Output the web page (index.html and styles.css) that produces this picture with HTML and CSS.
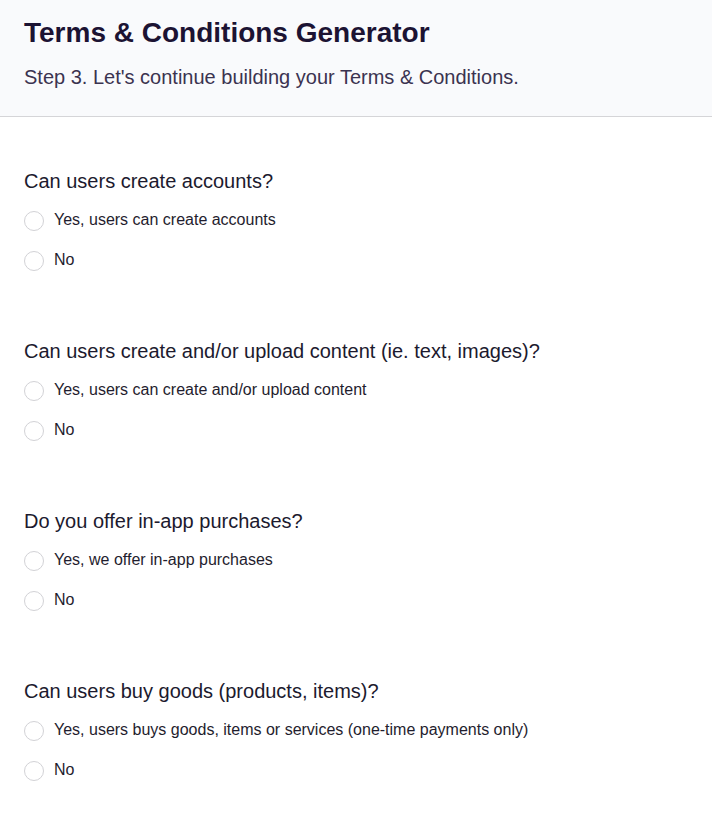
FILE: index.html
```html
<!DOCTYPE html>
<html lang="en">
<head>
<meta charset="utf-8">
<title>Terms &amp; Conditions Generator</title>
<link rel="stylesheet" href="styles.css">
</head>
<body>
<header class="header">
  <h1 class="title">Terms &amp; Conditions Generator</h1>
  <p class="subtitle">Step 3. Let's continue building your Terms &amp; Conditions.</p>
</header>
<main class="form">
  <section class="group">
    <h2 class="question">Can users create accounts?</h2>
    <label class="option"><span class="radio"></span><span class="label">Yes, users can create accounts</span></label>
    <label class="option"><span class="radio"></span><span class="label">No</span></label>
  </section>
  <section class="group">
    <h2 class="question">Can users create and/or upload content (ie. text, images)?</h2>
    <label class="option"><span class="radio"></span><span class="label">Yes, users can create and/or upload content</span></label>
    <label class="option"><span class="radio"></span><span class="label">No</span></label>
  </section>
  <section class="group">
    <h2 class="question">Do you offer in-app purchases?</h2>
    <label class="option"><span class="radio"></span><span class="label">Yes, we offer in-app purchases</span></label>
    <label class="option"><span class="radio"></span><span class="label">No</span></label>
  </section>
  <section class="group">
    <h2 class="question">Can users buy goods (products, items)?</h2>
    <label class="option"><span class="radio"></span><span class="label">Yes, users buys goods, items or services (one-time payments only)</span></label>
    <label class="option"><span class="radio"></span><span class="label">No</span></label>
  </section>
</main>
</body>
</html>
```
FILE: styles.css
```css
html, body {
  margin: 0;
  padding: 0;
  background: #ffffff;
  font-family: "Liberation Sans", Arial, sans-serif;
}

.header {
  background: #f9fafc;
  border-bottom: 1px solid #d5d5d8;
  padding: 16px 24px 27px;
}

.title {
  margin: 0;
  font-size: 28px;
  line-height: 34px;
  font-weight: bold;
  color: #1c1333;
}

.subtitle {
  margin: 15px 0 0;
  font-size: 20px;
  line-height: 24px;
  color: #3b3350;
}

.form {
  padding: 52px 24px 0;
  display: flex;
  flex-direction: column;
  gap: 59px;
}

.group {
  display: flex;
  flex-direction: column;
}

.question {
  margin: 0 0 7px;
  font-size: 20px;
  line-height: 24px;
  font-weight: normal;
  color: #1c1a2e;
}

.option {
  display: flex;
  align-items: center;
  height: 40px;
  gap: 10px;
}

.radio {
  box-sizing: border-box;
  width: 20px;
  height: 20px;
  border-radius: 50%;
  border: 1px solid #d2d2d6;
  background: #ffffff;
  flex: none;
  position: relative;
  top: 1px;
}

.label {
  font-size: 16px;
  line-height: 20px;
  color: #1f1d2e;
}
```
